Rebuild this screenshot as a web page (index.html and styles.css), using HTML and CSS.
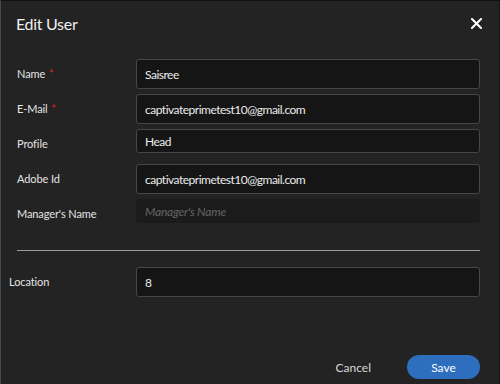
FILE: index.html
```html
<!DOCTYPE html>
<html lang="en">
<head>
  <meta charset="UTF-8">
  <title>Edit User</title>
  <link rel="stylesheet" href="styles.css">
</head>
<body>

<div class="dialog">
  <div class="dialog-header">
    <h1>Edit User</h1>
    <button class="close" aria-label="Close">
      <svg width="11" height="11" viewBox="0 0 11 11">
        <path d="M1 1 L10 10 M10 1 L1 10" stroke="#fff" stroke-width="2" stroke-linecap="square"/>
      </svg>
    </button>
  </div>

  <form class="form">
    <label class="label">Name <span class="req">*</span></label>
    <input class="field" type="text" value="Saisree">

    <label class="label">E-Mail <span class="req">*</span></label>
    <input class="field" type="text" value="captivateprimetest10@gmail.com">

    <label class="label">Profile</label>
    <input class="field short" type="text" value="Head">

    <label class="label">Adobe Id</label>
    <input class="field" type="text" value="captivateprimetest10@gmail.com">

    <label class="label">Manager's Name</label>
    <input class="field short plain" type="text" placeholder="Manager's Name">
  </form>

  <hr class="divider">

  <div class="form">
    <label class="label outdent">Location</label>
    <input class="field" type="text" value="8">
  </div>

  <div class="dialog-footer">
    <button class="btn-cancel">Cancel</button>
    <button class="btn-save">Save</button>
  </div>
</div>

</body>
</html>
```

FILE: styles.css
```css
body {
  margin: 0;
  background-color: #232323;
  font-family: Lato, "Open Sans", sans-serif;
  color: #e2e2e2;
}
.dialog {
  width: 500px;
  height: 384px;
  box-sizing: border-box;
  padding: 0 19px 5px 16px;
  border-left: 1px solid #4a4a4a;
  border-top: 1px solid #111;
  border-right: 1px solid #161616;
  display: flex;
  flex-direction: column;
}
.dialog-header {
  height: 45px;
  display: flex;
  align-items: center;
  justify-content: space-between;
}
.dialog-header h1 {
  margin: 0 0 0 -1px;
  font-size: 16px;
  letter-spacing: -0.3px;
  font-weight: normal;
  color: #f0f0f0;
}
.close {
  background: none;
  border: 0;
  padding: 0;
  margin-right: -2px;
  width: 11px;
  height: 11px;
  display: flex;
  cursor: pointer;
}
.form {
  display: grid;
  grid-template-columns: 119px 1fr;
  grid-auto-rows: 30px;
  row-gap: 5px;
  margin-top: 13px;
}
.label {
  font-size: 11px;
  line-height: 30px;
  color: #e4e4e4;
  letter-spacing: -0.1px;
}
.label.outdent {
  margin-left: -8px;
}
.req {
  color: #e0201e;
  margin-left: 1px;
}
.field {
  height: 30px;
  box-sizing: border-box;
  background-color: #151515;
  border: 1px solid #464646;
  border-radius: 3px;
  padding: 0 8px;
  font-family: inherit;
  font-size: 12px;
  letter-spacing: -0.5px;
  color: #ececec;
  outline: none;
  width: 100%;
}
.field.short {
  height: 24px;
}
.field.plain {
  border-color: #1b1b1b;
  background-color: #1b1b1b;
}
.field::placeholder {
  font-style: italic;
  letter-spacing: -0.2px;
  color: #666;
}
.divider {
  margin: 21px 0 3px;
  border: 0;
  height: 1px;
  background-color: #9c9c9c;
}
.dialog-footer {
  margin-top: auto;
  display: flex;
  justify-content: flex-end;
  gap: 18px;
}
.btn-cancel {
  background: none;
  border: 0;
  padding: 0 18px;
  height: 24px;
  font-family: inherit;
  font-size: 12px;
  color: #d8d8d8;
}
.btn-save {
  width: 73px;
  height: 24px;
  border: 0;
  border-radius: 12px;
  background-color: #2d6ebf;
  font-family: inherit;
  font-size: 12px;
  color: #fff;
}
```
